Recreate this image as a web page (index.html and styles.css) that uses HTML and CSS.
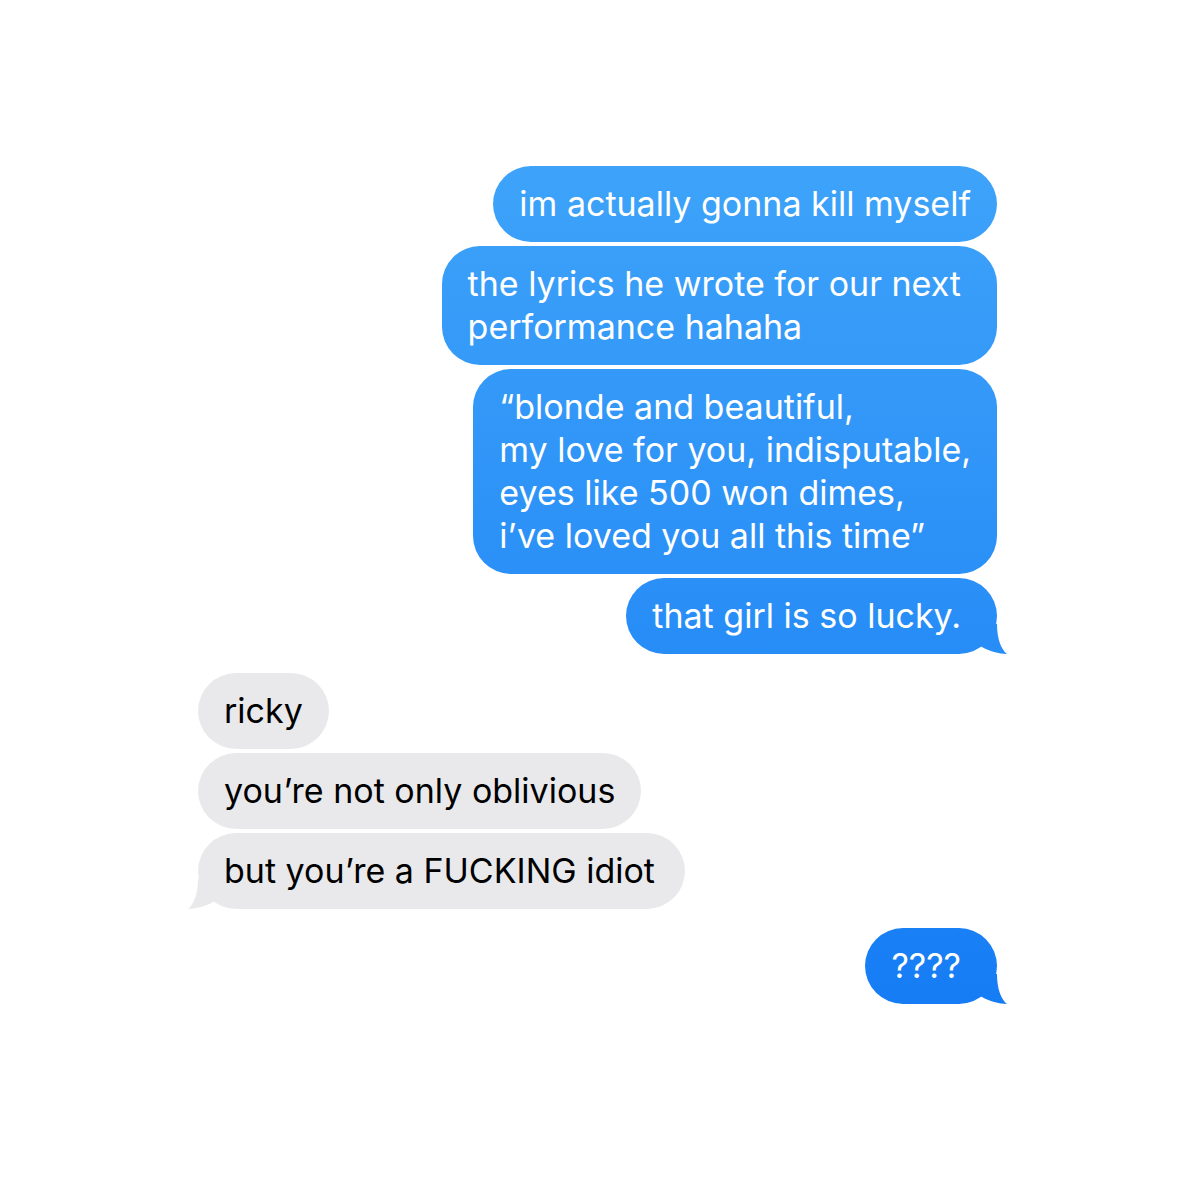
FILE: index.html
```html
<!DOCTYPE html>
<html lang="en">
<head>
    <meta charset="UTF-8">
    <title>Messages</title>
    <link rel="stylesheet" href="styles.css">
</head>
<body>
<div class="chat">
    <div class="group sent">
        <div class="bubble">im actually gonna kill myself</div>
        <div class="bubble loose">the lyrics he wrote for our next<br>performance hahaha</div>
        <div class="bubble">“blonde and beautiful,<br>my love for you, indisputable,<br>eyes like 500 won dimes,<br>i’ve loved you all this time”</div>
        <div class="bubble last">that girl is so lucky.<span class="tail"></span></div>
    </div>
    <div class="group received">
        <div class="bubble">ricky</div>
        <div class="bubble">you’re not only oblivious</div>
        <div class="bubble last">but you’re a FUCKING idiot<span class="tail"></span></div>
    </div>
    <div class="group sent">
        <div class="bubble last">????<span class="tail"></span></div>
    </div>
</div>
</body>
</html>
```
FILE: styles.css
```css
body {
    margin: 0;
    background: #fff;
    font-family: Inter, "Noto Sans", sans-serif;
}
.chat {
    width: 1200px;
    height: 1200px;
    box-sizing: border-box;
    padding: 166px 203px 0 198px;
    display: flex;
    flex-direction: column;
    gap: 19px;
}
.group {
    display: flex;
    flex-direction: column;
    gap: 4px;
}
.sent {
    align-items: flex-end;
}
.received {
    align-items: flex-start;
}
.bubble {
    position: relative;
    padding: 16px 26px 17px;
    font-size: 34px;
    line-height: 43px;
    border-radius: 38px;
}
.sent .bubble {
    color: #fff;
    background: linear-gradient(#3ea3f9 160px, #167cf5 1010px) fixed;
}
.sent .bubble.last,
.sent .bubble.loose {
    padding-right: 36px;
}
.received .bubble.last {
    padding-right: 30px;
}
.received .bubble {
    color: #000;
    background: #e9e9eb;
}
.tail {
    position: absolute;
    bottom: 0;
    width: 30px;
    height: 30px;
}
.sent .tail {
    right: -10px;
    background: linear-gradient(#3ea3f9 160px, #167cf5 1010px) fixed;
    clip-path: path('M0 0 H20 C20 15 24 25 30 30 C22 30 12 27 5 23 L0 20 Z');
}
.received .tail {
    left: -10px;
    background: #e9e9eb;
    clip-path: path('M30 0 H10 C10 15 6 25 0 30 C8 30 18 27 25 23 L30 20 Z');
}
```
